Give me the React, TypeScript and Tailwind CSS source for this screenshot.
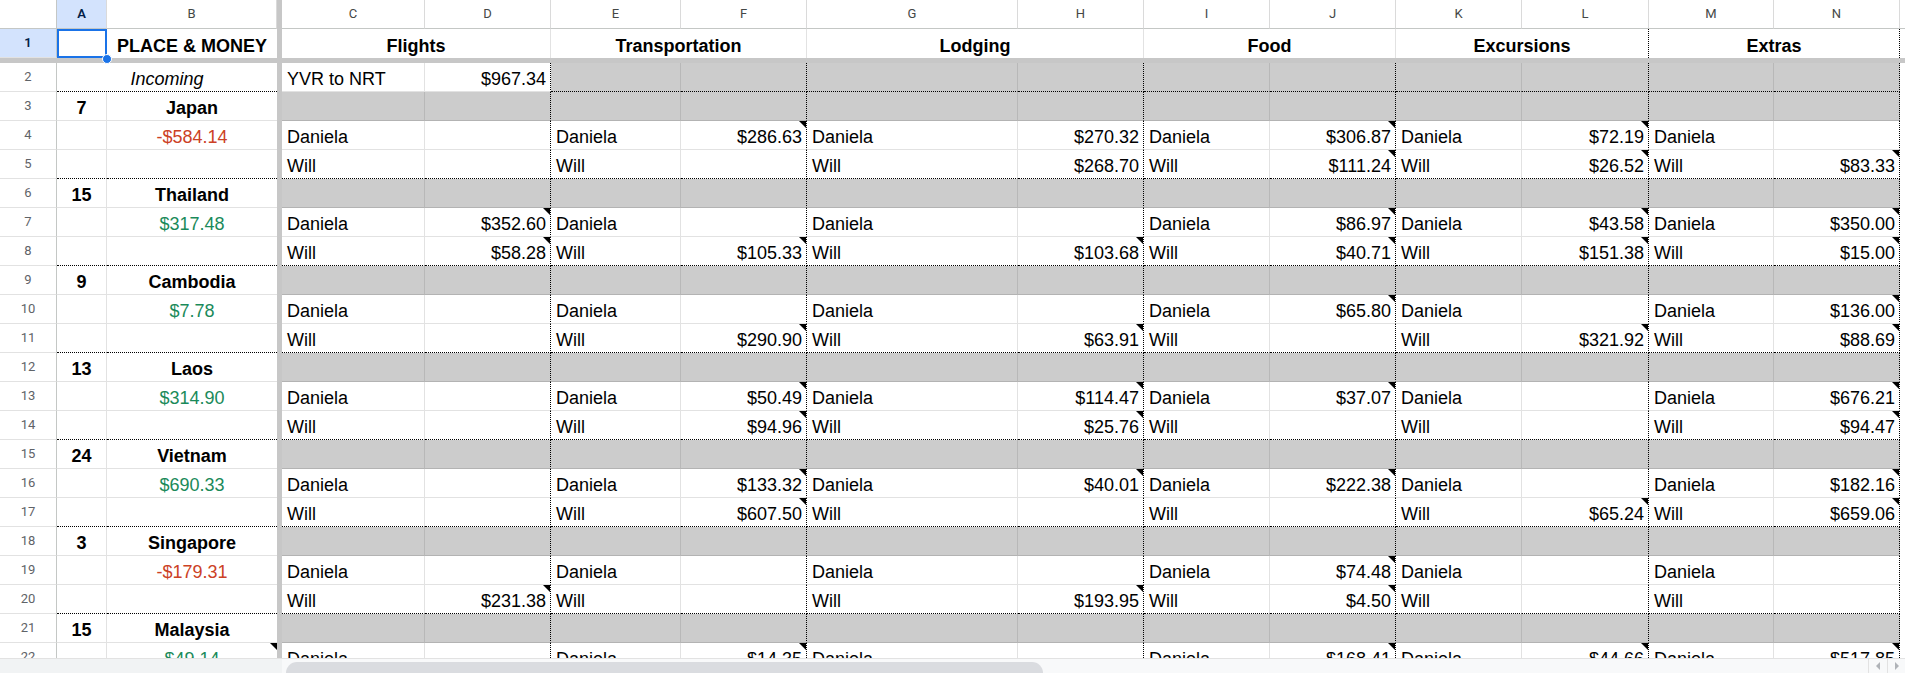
import clsx from 'clsx';
import type { ReactNode } from 'react';

type Amt = [string, boolean];

interface Country {
    days: string;
    name: string;
    money: string;
    neg: boolean;
    note?: boolean;
    dan: Amt[];
    will: Amt[];
}

const countries: Country[] = [
    {
        days: '7', name: 'Japan', money: '-$584.14', neg: true,
        dan: [['', false], ['$286.63', true], ['$270.32', false], ['$306.87', true], ['$72.19', true], ['', false]],
        will: [['', false], ['', false], ['$268.70', false], ['$111.24', true], ['$26.52', true], ['$83.33', true]],
    },
    {
        days: '15', name: 'Thailand', money: '$317.48', neg: false,
        dan: [['$352.60', true], ['', false], ['', false], ['$86.97', true], ['$43.58', true], ['$350.00', true]],
        will: [['$58.28', true], ['$105.33', true], ['$103.68', true], ['$40.71', true], ['$151.38', true], ['$15.00', true]],
    },
    {
        days: '9', name: 'Cambodia', money: '$7.78', neg: false,
        dan: [['', false], ['', false], ['', false], ['$65.80', true], ['', false], ['$136.00', true]],
        will: [['', false], ['$290.90', true], ['$63.91', true], ['', false], ['$321.92', true], ['$88.69', true]],
    },
    {
        days: '13', name: 'Laos', money: '$314.90', neg: false,
        dan: [['', false], ['$50.49', true], ['$114.47', true], ['$37.07', true], ['', false], ['$676.21', true]],
        will: [['', false], ['$94.96', true], ['$25.76', true], ['', false], ['', false], ['$94.47', true]],
    },
    {
        days: '24', name: 'Vietnam', money: '$690.33', neg: false,
        dan: [['', false], ['$133.32', true], ['$40.01', true], ['$222.38', true], ['', false], ['$182.16', true]],
        will: [['', false], ['$607.50', true], ['', false], ['', false], ['$65.24', true], ['$659.06', true]],
    },
    {
        days: '3', name: 'Singapore', money: '-$179.31', neg: true,
        dan: [['', false], ['', false], ['', false], ['$74.48', true], ['', false], ['', false]],
        will: [['$231.38', true], ['', false], ['$193.95', true], ['$4.50', true], ['', false], ['', false]],
    },
    {
        days: '15', name: 'Malaysia', money: '$49.14', neg: false, note: true,
        dan: [['', false], ['$14.35', true], ['', false], ['$168.41', true], ['$44.66', true], ['$517.85', true]],
        will: [['', false], ['', false], ['', false], ['', false], ['', false], ['', false]],
    },
];

const headers = ['Flights', 'Transportation', 'Lodging', 'Food', 'Excursions', 'Extras'];
const letters = [['C', 'D'], ['E', 'F'], ['G', 'H'], ['I', 'J'], ['K', 'L'], ['M', 'N']];

// column widths C..N, in pairs
const pairW: [string, string][] = [
    ['w-[143px]', 'w-[126px]'],
    ['w-[130px]', 'w-[126px]'],
    ['w-[211px]', 'w-[126px]'],
    ['w-[126px]', 'w-[126px]'],
    ['w-[126px]', 'w-[127px]'],
    ['w-[125px]', 'w-[126px]'],
];
const mergedW = ['w-[269px]', 'w-[256px]', 'w-[337px]', 'w-[252px]', 'w-[253px]', 'w-[251px]'];

// borders
const R_SOLID = 'border-r border-r-[#e2e2e2]';
const R_DOT = '[border-right:1px_dotted_#000]';
const R_GRAY = 'border-r border-r-[#b8b8b8]';
const B_SOLID = 'border-b border-b-[#e2e2e2]';
const B_DOT = '[border-bottom:1px_dotted_#000]';
const B_GRAY = 'border-b border-b-[#b3b3b3]';

function Row({ children }: { children: ReactNode }) {
    return <div className="flex h-[29px]">{children}</div>;
}

function Freeze() {
    return <div className="w-[5px] shrink-0 h-full bg-[#c7c7c7]" />;
}

function Note() {
    return <span className="absolute top-0 right-0 w-0 h-0 border-t-[7px] border-t-black border-l-[7px] border-l-transparent" />;
}

function RowNum({ n, active }: { n: number; active?: boolean }) {
    return (
        <div
            className={clsx(
                "w-[57px] shrink-0 h-full flex items-center justify-center border-r border-r-[#c4c7c5] border-b border-b-[#e2e2e2] text-[13px] font-['Roboto',Arial,sans-serif]",
                active ? 'bg-[#d3e3fd] text-[#041e49] font-semibold' : 'bg-white text-[#5f6368]'
            )}
        >
            {n}
        </div>
    );
}

function ColHead({ w, active, children }: { w: string; active?: boolean; children: ReactNode }) {
    return (
        <div
            className={clsx(
                "shrink-0 h-full flex items-center justify-center border-r border-r-[#dadada] border-b border-b-[#c4c7c5] text-[13px] font-['Roboto',Arial,sans-serif]",
                w,
                active ? 'bg-[#d3e3fd] text-[#041e49] font-semibold' : 'bg-white text-[#444746]'
            )}
        >
            {children}
        </div>
    );
}

function Cell({
    w,
    cls,
    align = 'left',
    note,
    children,
}: {
    w: string;
    cls?: string;
    align?: 'left' | 'right' | 'center';
    note?: boolean;
    children?: ReactNode;
}) {
    return (
        <div
            className={clsx(
                'relative shrink-0 h-full flex items-end pb-[2px] whitespace-nowrap overflow-hidden',
                w,
                cls,
                align === 'right' ? 'justify-end pr-[4px]' : align === 'center' ? 'justify-center' : 'pl-[5px]'
            )}
        >
            {children}
            {note && <Note />}
        </div>
    );
}

function GrayPairs({ bottom }: { bottom: string }) {
    return (
        <>
            {pairW.map(([a, b], i) => (
                <div key={i} className="contents">
                    <div className={clsx('shrink-0 h-full bg-[#cccccc]', a, R_GRAY, bottom)} />
                    <div className={clsx('shrink-0 h-full bg-[#cccccc]', b, R_DOT, bottom)} />
                </div>
            ))}
        </>
    );
}

function PersonPairs({ name, vals, bottom }: { name: string; vals: Amt[]; bottom: string }) {
    return (
        <>
            {pairW.map(([a, b], i) => (
                <div key={i} className="contents">
                    <Cell w={a} cls={clsx(R_SOLID, bottom)}>{name}</Cell>
                    <Cell w={b} align="right" note={vals[i][1]} cls={clsx(R_DOT, bottom)}>
                        {vals[i][0]}
                    </Cell>
                </div>
            ))}
        </>
    );
}

export default function App() {
    let rowNo = 2;

    return (
        <div className="w-[1905px] h-[673px] overflow-hidden bg-white flex flex-col font-['Liberation_Sans',Arial,sans-serif] text-[18px] leading-[20px] text-black">
            <div className="h-[658px] overflow-hidden">
                {/* Column letters */}
                <Row>
                    <div className="w-[57px] shrink-0 h-full bg-white border-r border-r-[#c4c7c5] border-b border-b-[#c4c7c5]" />
                    <ColHead w="w-[50px]" active>A</ColHead>
                    <ColHead w="w-[170px]">B</ColHead>
                    <Freeze />
                    {letters.map((p, i) => (
                        <div key={i} className="contents">
                            <ColHead w={pairW[i][0]}>{p[0]}</ColHead>
                            <ColHead w={pairW[i][1]}>{p[1]}</ColHead>
                        </div>
                    ))}
                    <div className="flex-1 h-full border-b border-b-[#c4c7c5]" />
                </Row>

                {/* Row 1 titles */}
                <Row>
                    <RowNum n={1} active />
                    <div className="relative shrink-0 w-[50px] h-full border-r border-r-[#e2e2e2]">
                        <div className="absolute left-0 top-0 bottom-0 right-[-1px] border-2 border-[#1a73e8]" />
                        <div className="absolute right-[-6px] bottom-[-6px] z-10 w-[10px] h-[10px] rounded-full bg-[#1a73e8] border border-white" />
                    </div>
                    <Cell w="w-[170px]" align="center" cls="font-bold">PLACE &amp; MONEY</Cell>
                    <Freeze />
                    {headers.map((h, i) => (
                        <Cell key={h} w={mergedW[i]} align="center" cls={clsx('font-bold', i >= 4 ? R_DOT : R_SOLID)}>
                            {h}
                        </Cell>
                    ))}
                </Row>

                {/* frozen rows divider */}
                <div className="h-[5px] bg-[#c7c7c7]" />

                {/* Row 2 */}
                <Row>
                    <RowNum n={2} />
                    <Cell w="w-[220px]" align="center" cls={clsx('italic', B_DOT)}>Incoming</Cell>
                    <Freeze />
                    <Cell w="w-[143px]" cls={clsx(R_SOLID, B_SOLID)}>YVR to NRT</Cell>
                    <Cell w="w-[126px]" align="right" cls={clsx(R_DOT, B_SOLID)}>$967.34</Cell>
                    {pairW.slice(1).map(([a, b], i) => (
                        <div key={i} className="contents">
                            <div className={clsx('shrink-0 h-full bg-[#cccccc]', a, R_GRAY, B_DOT)} />
                            <div className={clsx('shrink-0 h-full bg-[#cccccc]', b, R_DOT, B_DOT)} />
                        </div>
                    ))}
                </Row>

                {countries.map((c) => {
                    const r1 = ++rowNo;
                    const r2 = ++rowNo;
                    const r3 = ++rowNo;
                    return (
                        <div key={c.name}>
                            {/* country heading */}
                            <Row>
                                <RowNum n={r1} />
                                <Cell w="w-[50px]" align="center" cls={clsx('font-bold', R_SOLID, B_SOLID)}>{c.days}</Cell>
                                <Cell w="w-[170px]" align="center" cls={clsx('font-bold', B_SOLID)}>{c.name}</Cell>
                                <Freeze />
                                <GrayPairs bottom={B_GRAY} />
                            </Row>
                            {/* Daniela */}
                            <Row>
                                <RowNum n={r2} />
                                <Cell w="w-[50px]" cls={clsx(R_SOLID, B_SOLID)} />
                                <Cell
                                    w="w-[170px]"
                                    align="center"
                                    note={c.note}
                                    cls={clsx(B_SOLID, c.neg ? 'text-[#cc4125]' : 'text-[#1a8a5a]')}
                                >
                                    {c.money}
                                </Cell>
                                <Freeze />
                                <PersonPairs name="Daniela" vals={c.dan} bottom={B_SOLID} />
                            </Row>
                            {/* Will */}
                            <Row>
                                <RowNum n={r3} />
                                <Cell w="w-[50px]" cls={clsx(R_SOLID, B_DOT)} />
                                <Cell w="w-[170px]" cls={B_DOT} />
                                <Freeze />
                                <PersonPairs name="Will" vals={c.will} bottom={B_DOT} />
                            </Row>
                        </div>
                    );
                })}
            </div>

            {/* horizontal scrollbar */}
            <div className="h-[15px] flex bg-[#f8f9fa] border-t border-t-[#e2e2e2]">
                <div className="w-[282px] shrink-0 h-full bg-[#f1f3f4]" />
                <div className="flex-1 h-full flex items-end pl-[4px]">
                    <div className="w-[757px] h-[11px] rounded-t-full rounded-b-none bg-[#dadce0]" />
                </div>
                <div className="w-[19px] shrink-0 h-full flex items-center justify-center border-l border-l-[#e2e2e2]">
                    <span className="w-0 h-0 border-y-[4px] border-y-transparent border-r-[4px] border-r-[#b0b3b8]" />
                </div>
                <div className="w-[18px] shrink-0 h-full flex items-center justify-center border-l border-l-[#e2e2e2]">
                    <span className="w-0 h-0 border-y-[4px] border-y-transparent border-l-[4px] border-l-[#b0b3b8]" />
                </div>
            </div>
        </div>
    );
}
